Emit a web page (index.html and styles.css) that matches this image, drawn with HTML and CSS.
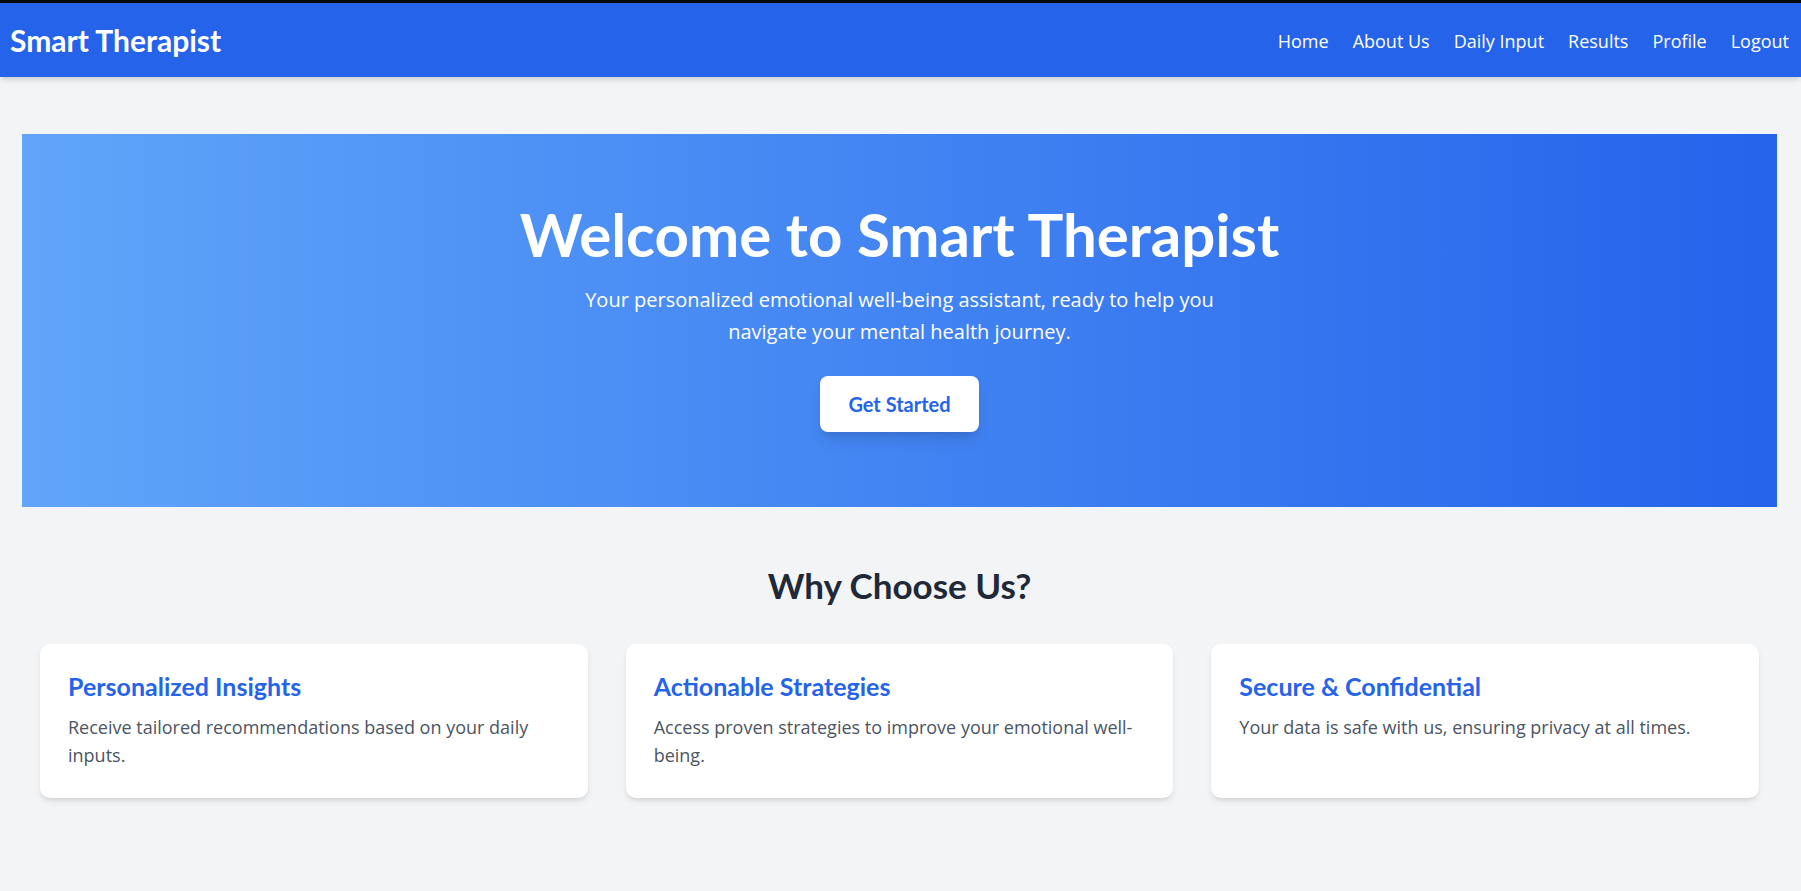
FILE: index.html
```html
<!DOCTYPE html>
<html lang="en">
<head>
<meta charset="utf-8">
<title>Smart Therapist</title>
<link rel="stylesheet" href="styles.css">
</head>
<body>
<header class="topbar">
  <a class="brand" href="#">Smart Therapist</a>
  <nav class="nav">
    <a href="#">Home</a>
    <a href="#">About Us</a>
    <a href="#">Daily Input</a>
    <a href="#">Results</a>
    <a href="#">Profile</a>
    <a href="#">Logout</a>
  </nav>
</header>
<main class="main">
  <section class="hero">
    <h1 class="hero-title">Welcome to Smart Therapist</h1>
    <p class="hero-sub">Your personalized emotional well-being assistant, ready to help you navigate your mental health journey.</p>
    <a class="hero-btn" href="#">Get Started</a>
  </section>
  <section class="why">
    <h2 class="why-title">Why Choose Us?</h2>
    <div class="cards">
      <div class="card">
        <h3 class="card-title">Personalized Insights</h3>
        <p class="card-text">Receive tailored recommendations based on your daily inputs.</p>
      </div>
      <div class="card">
        <h3 class="card-title">Actionable Strategies</h3>
        <p class="card-text">Access proven strategies to improve your emotional well-being.</p>
      </div>
      <div class="card">
        <h3 class="card-title">Secure &amp; Confidential</h3>
        <p class="card-text">Your data is safe with us, ensuring privacy at all times.</p>
      </div>
    </div>
  </section>
</main>
</body>
</html>
```

FILE: styles.css
```css
* { box-sizing: border-box; }
html, body { margin: 0; padding: 0; }
body {
  background: #f3f4f6;
  font-family: "Open Sans", "Noto Sans", sans-serif;
  color: #1f2937;
  min-height: 891px;
  border-top: 3px solid #0a0a0a;
}
a { text-decoration: none; }

.topbar {
  height: 74px;
  background: #2563eb;
  display: flex;
  align-items: center;
  justify-content: space-between;
  padding: 0 12px 0 10px;
  box-shadow: 0 4px 6px -1px rgba(0,0,0,0.12), 0 2px 4px -2px rgba(0,0,0,0.1);
  position: relative;
}
.brand {
  color: #fff;
  font-family: Lato, "Open Sans", sans-serif;
  font-size: 30px;
  font-weight: 700;
  line-height: 36px;
}
.nav { display: flex; gap: 24px; }
.nav a {
  color: #fff;
  font-size: 18px;
  line-height: 28px;
  padding-top: 2px;
}

.main { padding: 57px 24px 60px 22px; }

.hero {
  background: linear-gradient(to right, #60a5fa, #2563eb);
  height: 373px;
  padding-top: 70px;
  display: flex;
  flex-direction: column;
  align-items: center;
  text-align: center;
  color: #fff;
}
.hero-title {
  margin: 0 0 20px;
  font-family: Lato, "Open Sans", sans-serif;
  font-size: 60px;
  line-height: 60px;
  font-weight: 700;
}
.hero-sub {
  margin: 0 0 28px;
  max-width: 672px;
  font-size: 20px;
  line-height: 32px;
}
.hero-btn {
  display: inline-block;
  background: #fff;
  color: #2563eb;
  font-family: Lato, "Open Sans", sans-serif;
  font-weight: 700;
  font-size: 20px;
  line-height: 56px;
  height: 56px;
  width: 159px;
  border-radius: 8px;
  box-shadow: 0 10px 15px -3px rgba(0,0,0,0.12), 0 4px 6px -4px rgba(0,0,0,0.1);
}

.why { padding: 58px 18px 0 18px; }
.why-title {
  margin: 0 0 39px;
  text-align: center;
  font-family: Lato, "Open Sans", sans-serif;
  font-size: 35px;
  line-height: 40px;
  font-weight: 700;
  color: #1f2937;
}
.cards {
  display: grid;
  grid-template-columns: repeat(3, 1fr);
  gap: 38px;
}
.card {
  background: #fff;
  border-radius: 10px;
  padding: 26px 28px 29px;
  min-height: 154px;
  box-shadow: 0 4px 6px -1px rgba(0,0,0,0.1), 0 2px 4px -2px rgba(0,0,0,0.08);
}
.card-title {
  margin: 0 0 11px;
  color: #2563eb;
  font-family: Lato, "Open Sans", sans-serif;
  font-size: 25px;
  line-height: 32px;
  font-weight: 700;
}
.card-text {
  margin: 0;
  color: #4b5563;
  font-size: 18px;
  line-height: 28px;
}
```
